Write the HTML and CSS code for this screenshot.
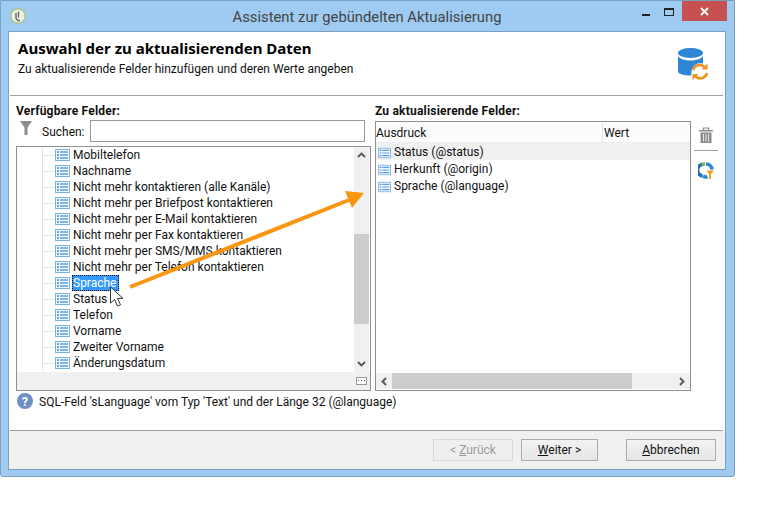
FILE: index.html
```html
<!DOCTYPE html>
<html lang="de">
<head>
    <meta charset="UTF-8">
    <meta name="viewport" content="width=device-width, initial-scale=1.0">
    <title>Assistent zur gebündelten Aktualisierung</title>
    <link rel="stylesheet" href="styles.css">
</head>
<body>

<svg class="defs" width="0" height="0">
    <symbol id="field" viewBox="0 0 15 12">
        <rect x="0.5" y="0.5" width="14" height="11" fill="#f2f8fe" stroke="#7fb2e0"/>
        <path d="M2 3h2M2 6h2M2 9h2" stroke="#3d8ad6" stroke-width="1.4"/>
        <path d="M5 3h8M5 6h8M5 9h8" stroke="#5a9fe0" stroke-width="1.4"/>
    </symbol>
    <symbol id="chevron-up" viewBox="0 0 9 6">
        <path d="M1 5l3.5-3.5L8 5" fill="none" stroke="#555" stroke-width="1.8"/>
    </symbol>
    <symbol id="chevron-down" viewBox="0 0 9 6">
        <path d="M1 1l3.5 3.5L8 1" fill="none" stroke="#555" stroke-width="1.8"/>
    </symbol>
    <symbol id="chevron-left" viewBox="0 0 6 9">
        <path d="M5 1L1.5 4.5 5 8" fill="none" stroke="#555" stroke-width="1.8"/>
    </symbol>
    <symbol id="chevron-right" viewBox="0 0 6 9">
        <path d="M1 1l3.5 3.5L1 8" fill="none" stroke="#555" stroke-width="1.8"/>
    </symbol>
</svg>

<div class="window">
    <div class="titlebar">
        <svg class="app-icon" width="16" height="16" viewBox="0 0 16 16">
            <circle cx="8" cy="8" r="7.2" fill="#eef0e8" stroke="#a6c46a" stroke-width="1.2"/>
            <path d="M8.5 3.5v6M6 5v5.500l2 2h2" fill="none" stroke="#666" stroke-width="1.4"/>
        </svg>
        <div class="title">Assistent zur gebündelten Aktualisierung</div>
        <div class="controls">
            <span class="minimize"></span>
            <span class="maximize"></span>
            <span class="close">
                <svg width="9" height="9" viewBox="0 0 9 9"><path d="M1 1l7 7M8 1L1 8" stroke="#fff" stroke-width="1.8"/></svg>
            </span>
        </div>
    </div>

    <div class="client">
        <div class="header">
            <div>
                <h1>Auswahl der zu aktualisierenden Daten</h1>
                <p>Zu aktualisierende Felder hinzufügen und deren Werte angeben</p>
            </div>
            <svg class="header-icon" width="30" height="32" viewBox="0 0 30 32">
                <ellipse cx="12.500" cy="5" rx="12.500" ry="5" fill="#2f86d6"/>
                <path d="M0 8c2 3 7 4.500 12.500 4.500S23 11 25 8v7.500a9 9 0 0 0-11.500 8.800c0 1.500 0 2-.5 3.200C6 27.500 0 26 0 23.500z" fill="#2f86d6"/>
                <path d="M15 22a7 7 0 0 1 11.500-3M29 25a7 7 0 0 1-11.500 3.500" fill="none" stroke="#f0921e" stroke-width="2.600"/>
                <path d="M29.500 15.500v6h-6zM14.500 32v-6h6z" fill="#f0921e"/>
            </svg>
        </div>

        <div class="fields">
            <div class="available">
                <div class="group-label">Verfügbare Felder:</div>
                <div class="search">
                    <svg class="filter-icon" width="12" height="14" viewBox="0 0 12 14"><path d="M0 0h12L7.500 6.500V14h-3V6.500z" fill="#8c8c8c"/></svg>
                    <label for="search">Suchen:</label>
                    <input type="text" id="search">
                </div>
                <div class="tree-box">
                    <div class="tree-main">
                        <ul class="tree">
                            <li><svg class="ico"><use href="#field"/></svg><span>Mobiltelefon</span></li>
                            <li><svg class="ico"><use href="#field"/></svg><span>Nachname</span></li>
                            <li><svg class="ico"><use href="#field"/></svg><span>Nicht mehr kontaktieren (alle Kanäle)</span></li>
                            <li><svg class="ico"><use href="#field"/></svg><span>Nicht mehr per Briefpost kontaktieren</span></li>
                            <li><svg class="ico"><use href="#field"/></svg><span>Nicht mehr per E-Mail kontaktieren</span></li>
                            <li><svg class="ico"><use href="#field"/></svg><span>Nicht mehr per Fax kontaktieren</span></li>
                            <li><svg class="ico"><use href="#field"/></svg><span>Nicht mehr per SMS/MMS kontaktieren</span></li>
                            <li><svg class="ico"><use href="#field"/></svg><span>Nicht mehr per Telefon kontaktieren</span></li>
                            <li><svg class="ico"><use href="#field"/></svg><span class="selected">Sprache</span></li>
                            <li><svg class="ico"><use href="#field"/></svg><span>Status</span></li>
                            <li><svg class="ico"><use href="#field"/></svg><span>Telefon</span></li>
                            <li><svg class="ico"><use href="#field"/></svg><span>Vorname</span></li>
                            <li><svg class="ico"><use href="#field"/></svg><span>Zweiter Vorname</span></li>
                            <li><svg class="ico"><use href="#field"/></svg><span>Änderungsdatum</span></li>
                        </ul>
                        <div class="vscroll">
                            <svg class="arrow-v"><use href="#chevron-up"/></svg>
                            <div class="vtrack"><div class="vthumb"></div></div>
                            <svg class="arrow-v"><use href="#chevron-down"/></svg>
                        </div>
                    </div>
                    <div class="tree-foot">
                        <span class="more"></span>
                    </div>
                </div>
            </div>

            <div class="selected-fields">
                <div class="group-label">Zu aktualisierende Felder:</div>
                <div class="table-wrap">
                    <div class="table-box">
                        <div class="table-head">
                            <div class="col-expr">Ausdruck</div>
                            <div class="col-value">Wert</div>
                        </div>
                        <div class="table-body">
                            <div class="table-row current"><svg class="ico"><use href="#field"/></svg>Status (@status)</div>
                            <div class="table-row"><svg class="ico"><use href="#field"/></svg>Herkunft (@origin)</div>
                            <div class="table-row"><svg class="ico"><use href="#field"/></svg>Sprache (@language)</div>
                        </div>
                        <div class="hscroll">
                            <svg class="arrow-h"><use href="#chevron-left"/></svg>
                            <div class="htrack"><div class="hthumb"></div></div>
                            <svg class="arrow-h"><use href="#chevron-right"/></svg>
                        </div>
                    </div>
                    <div class="side-tools">
                        <svg width="14" height="16" viewBox="0 0 14 16">
                            <path d="M0 3h14v1.500H0z" fill="#8c8c8c"/>
                            <path d="M4.500 3V1h5v2" fill="none" stroke="#8c8c8c" stroke-width="1.200"/>
                            <path d="M1.500 5.500h11V16h-11z" fill="#8c8c8c"/>
                            <path d="M4.500 7v7.500M7 7v7.500M9.500 7v7.500" stroke="#e6e6e6" stroke-width="1"/>
                        </svg>
                        <div class="tool-sep"></div>
                        <svg width="16" height="17" viewBox="0 0 16 17">
                            <path d="M4.500 2.200A6 6 0 0 0 4.500 14" fill="none" stroke="#1f6fb8" stroke-width="3.600"/>
                            <path d="M4 3A6 6 0 0 1 7 1.800" fill="none" stroke="#7cb83e" stroke-width="3.600"/>
                            <path d="M8 2a6 6 0 0 1 6 5.500" fill="none" stroke="#2f86d6" stroke-width="3.600"/>
                            <path d="M5 14.200a6 6 0 0 0 4.500.5" fill="none" stroke="#2f86d6" stroke-width="3.600"/>
                            <path d="M8 8.500h8l-3 3.500v5h-2v-5z" fill="#f0a020"/>
                        </svg>
                    </div>
                </div>
            </div>
        </div>

        <div class="hint">
            <svg width="16" height="16" viewBox="0 0 16 16">
                <circle cx="8" cy="8" r="8" fill="#6f90c4"/>
                <text x="8" y="12.500" text-anchor="middle" class="hint-mark">?</text>
            </svg>
            <span>SQL-Feld 'sLanguage' vom Typ 'Text' und der Länge 32 (@language)</span>
        </div>

        <div class="footer">
            <button class="btn back" disabled>&lt; <u>Z</u>urück</button>
            <button class="btn next"><u>W</u>eiter &gt;</button>
            <button class="btn cancel"><u>A</u>bbrechen</button>
        </div>
    </div>
</div>

<!-- annotation drawn over the screenshot -->
<svg class="annotation" width="766" height="508" viewBox="0 0 766 508">
    <path d="M130 287L349 200" stroke="#fa9510" stroke-width="4" fill="none"/>
    <path d="M364 193L345 191L352 208z" fill="#fa9510"/>
    <path d="M110.500 287v16l4-3.500 3 6.500 3-1.300-3-6.300h5.500z" fill="#fff" stroke="#333" stroke-width="1"/>
</svg>

</body>
</html>
```

FILE: styles.css
```css
* {
    box-sizing: border-box;
}
body {
    margin: 0;
    background-color: #fff;
    font-family: Roboto, Arial, sans-serif;
    font-size: 12px;
    color: #111;
}
.defs {
    display: block;
    height: 0;
}
.window {
    width: 735px;
    height: 477px;
    display: flex;
    flex-direction: column;
    padding: 0 8px 6px 7px;
    background-color: #9fcbf2;
    border: 1px solid #7d9fbd;
    border-radius: 0 0 3px 3px;
}
.titlebar {
    height: 30px;
    display: grid;
    grid-template-columns: 1fr auto 1fr;
    flex-shrink: 0;
}
.app-icon {
    margin: 7px 0 0 2px;
}
.title {
    padding-top: 6px;
    text-align: center;
    font-size: 14.8px;
    line-height: 20px;
    color: #444;
}
.controls {
    display: flex;
    align-items: flex-start;
    justify-content: flex-end;
    margin-right: -1px;
}
.minimize {
    width: 8px;
    height: 2px;
    margin: 13px 14px 0 0;
    background-color: #222;
}
.maximize {
    width: 10px;
    height: 8px;
    margin: 7px 8px 0 0;
    border: 1px solid #222;
    border-top-width: 2px;
}
.close {
    width: 45px;
    height: 20px;
    display: flex;
    align-items: center;
    justify-content: center;
    background-color: #c75050;
}
.client {
    flex: 1;
    display: flex;
    flex-direction: column;
    background-color: #fff;
    border: 1px solid #7d9fbd;
}
.header {
    height: 64px;
    flex-shrink: 0;
    display: flex;
    justify-content: space-between;
    margin: 0 2px 0 1px;
    padding: 6px 15px 0 8px;
    border-bottom: 1px solid #a0a0a0;
}
h1 {
    margin: 0;
    font-family: "Noto Sans", Arial, sans-serif;
    font-size: 15px;
    line-height: 20px;
    font-weight: bold;
    color: #000;
}
.header p {
    margin: 3px 0 0;
    line-height: 16px;
}
.header-icon {
    margin-top: 10px;
}
.fields {
    height: 295px;
    display: flex;
    flex-shrink: 0;
    padding: 7px 0 0 7px;
}
.available {
    width: 355px;
}
.selected-fields {
    margin-left: 4px;
}
.group-label {
    height: 18px;
    line-height: 16px;
    font-weight: bold;
    letter-spacing: 0.2px;
    color: #111;
}
.search {
    height: 25px;
    display: flex;
    align-items: flex-start;
}
.filter-icon {
    margin: 0 0 0 4px;
}
.search label {
    width: 48px;
    margin: 3px 0 0 10px;
    line-height: 16px;
}
.search input {
    width: 275px;
    height: 22px;
    margin-top: -1px;
    border: 1px solid #9a9a9a;
    background-color: #fff;
}
.tree-box {
    width: 355px;
    height: 245px;
    border: 1px solid #8e8f8f;
    display: flex;
    flex-direction: column;
}
.tree-main {
    flex: 1;
    display: flex;
    min-height: 0;
}
.tree {
    flex: 1;
    list-style: none;
    margin: 0;
    padding: 0 0 0 25px;
    background-color: #fff;
}
.tree li {
    height: 16px;
    display: flex;
    align-items: center;
    padding-left: 12px;
    border-left: 1px solid #e2e2e2;
    line-height: 16px;
    white-space: nowrap;
    background: linear-gradient(#e2e2e2, #e2e2e2) no-repeat 0 8px / 12px 1px;
}
.ico {
    width: 15px;
    height: 12px;
    flex-shrink: 0;
}
.tree li span {
    margin-left: 2px;
    padding: 0 1px;
}
.tree li .selected {
    height: 16px;
    margin-left: 2px;
    padding: 0 3px 0 1px;
    color: #fff;
    background-color: #3399ff;
    outline: 1px dotted #111;
    outline-offset: -1px;
}
.vscroll {
    width: 15px;
    margin-right: 1px;
    display: flex;
    flex-direction: column;
    align-items: center;
    background-color: #f0f0f0;
}
.arrow-v {
    width: 9px;
    height: 6px;
    margin: 5px 0;
    flex-shrink: 0;
}
.vtrack {
    flex: 1;
    width: 15px;
    padding-top: 71px;
}
.vthumb {
    height: 90px;
    background-color: #cdcdcd;
}
.tree-foot {
    height: 18px;
    flex-shrink: 0;
    display: flex;
    justify-content: flex-end;
    align-items: center;
    padding-right: 3px;
    background-color: #f0f0f0;
}
.more {
    width: 11px;
    height: 8px;
    border: 1px solid #999;
    background: #fff linear-gradient(90deg, #666 33%, transparent 33%) repeat-x 1px 2px / 3px 1px;
}
.table-wrap {
    display: flex;
}
.table-box {
    width: 316px;
    height: 270px;
    display: flex;
    flex-direction: column;
    border: 1px solid #8e8f8f;
}
.table-head {
    height: 21px;
    flex-shrink: 0;
    display: flex;
    line-height: 22px;
    background-color: #fcfcfc;
    border-bottom: 1px solid #e9eff6;
}
.col-expr {
    width: 227px;
    border-right: 1px solid #dce6f1;
}
.col-value {
    padding-left: 1px;
}
.table-body {
    flex: 1;
}
.table-row {
    height: 17px;
    display: flex;
    align-items: center;
    gap: 3px;
    padding: 2px 0 0 2px;
    line-height: 15px;
}
.table-row .ico {
    width: 13px;
}
.table-row.current {
    background-color: #f0f0f0;
}
.hscroll {
    height: 16px;
    flex-shrink: 0;
    display: flex;
    align-items: center;
    background-color: #f0f0f0;
    margin-bottom: 1px;
}
.arrow-h {
    width: 6px;
    height: 9px;
    margin: 0 5px;
    flex-shrink: 0;
}
.htrack {
    flex: 1;
    height: 16px;
}
.hthumb {
    width: 240px;
    height: 16px;
    background-color: #cdcdcd;
}
.side-tools {
    width: 26px;
    display: flex;
    flex-direction: column;
    align-items: center;
    margin-left: 2px;
    padding-top: 6px;
}
.tool-sep {
    width: 24px;
    height: 1px;
    margin: 7px 0 11px;
    background-color: #a0a0a0;
}
.hint {
    height: 40px;
    flex-shrink: 0;
    display: flex;
    gap: 6px;
    margin: 0 2px 0 1px;
    padding: 2px 0 0 7px;
    line-height: 18px;
    border-bottom: 1px solid #a0a0a0;
}
.hint-mark {
    fill: #fff;
    font-size: 12px;
    font-weight: bold;
    font-family: Roboto, Arial, sans-serif;
}
.footer {
    flex: 1;
    display: flex;
    padding: 8px 9px 0 0;
    background-color: #f0f0f0;
}
.btn {
    height: 22px;
    padding: 0;
    font-family: inherit;
    font-size: 12px;
    color: #111;
    background: linear-gradient(#f2f2f2, #e6e6e6);
    border: 1px solid #acacac;
}
.back {
    width: 80px;
    margin-left: auto;
    color: #9a9a9a;
    background: #efefef;
    border-color: #d9d9d9;
}
.next {
    width: 77px;
    margin-left: 8px;
}
.cancel {
    width: 90px;
    margin-left: 28px;
}
.annotation {
    position: absolute;
    top: 0;
    left: 0;
    pointer-events: none;
}
```
